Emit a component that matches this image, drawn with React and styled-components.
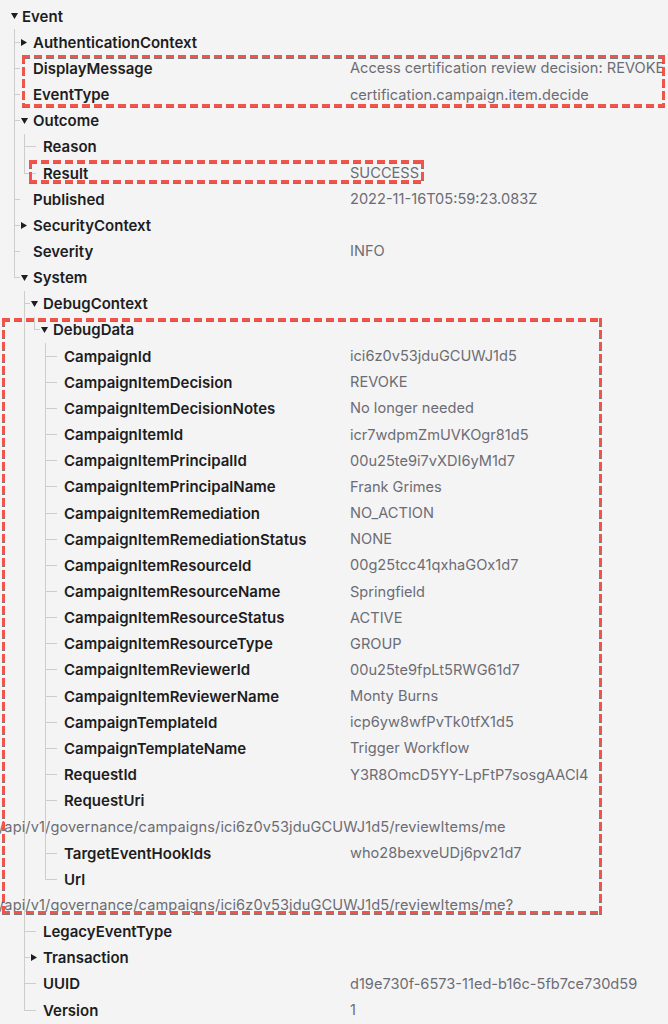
import styled, { createGlobalStyle, css } from "styled-components";

const ROW_H = 26.16;
const TEXT_X = [22, 33, 43, 53, 64];
const LINE_X = [10, 14, 24, 34, 45];
const LINE_COLOR = "#cdcdcd";

const GlobalStyle = createGlobalStyle`
  html, body {
    margin: 0;
    background: #f4f4f4;
  }
  body {
    font-family: Inter, "Noto Sans", sans-serif;
    -webkit-font-smoothing: antialiased;
  }
`;

const Page = styled.div`
  width: 668px;
  height: 1024px;
  padding-top: 3px;
  box-sizing: border-box;
  overflow: hidden;
`;

const NodeWrap = styled.div`
  position: relative;
  ${({ $line, $last }) =>
    $line != null &&
    css`
      &::before {
        content: "";
        position: absolute;
        left: ${$line}px;
        top: 0;
        width: 1px;
        background: ${LINE_COLOR};
        ${$last ? `height: ${ROW_H / 2}px;` : "bottom: 0;"}
      }
    `}
`;

const Row = styled.div`
  display: grid;
  grid-template-columns: 350px 1fr;
  align-items: center;
  height: ${ROW_H}px;
`;

const Label = styled.div`
  display: flex;
  align-items: center;
  padding-left: ${(p) => p.$pad}px;
  font-size: 15px;
  font-weight: 600;
  color: #1d1d22;
  white-space: nowrap;
`;

const Tick = styled.span`
  flex: none;
  width: ${(p) => p.$w}px;
  height: 1px;
  background: ${LINE_COLOR};
`;

const Slot = styled.span`
  flex: none;
  width: ${(p) => p.$w}px;
  display: flex;
  align-items: center;
  padding-left: 1px;
  box-sizing: border-box;
`;

const Value = styled.div`
  font-size: 14.6px;
  color: #6c6c74;
  white-space: nowrap;
`;

const WrappedValue = styled.div`
  height: ${ROW_H}px;
  line-height: ${ROW_H}px;
  margin-left: -1px;
  font-size: 14.6px;
  letter-spacing: 0.1px;
  color: #6c6c74;
  white-space: nowrap;
`;

const dashes = (angle) =>
  `repeating-linear-gradient(${angle}, #f0554c 0 8px, transparent 8px 12px)`;

const Highlight = styled.div`
  position: relative;
  &::after {
    content: "";
    position: absolute;
    z-index: 2;
    pointer-events: none;
    left: ${(p) => p.$box.x0}px;
    width: ${(p) => p.$box.x1 - p.$box.x0}px;
    top: ${(p) => p.$box.top}px;
    bottom: ${(p) => p.$box.bottom}px;
    background:
      ${dashes("90deg")} top left / 100% 3px no-repeat,
      ${dashes("90deg")} bottom left / 100% 3px no-repeat,
      ${dashes("180deg")} top left / 3px 100% no-repeat,
      ${dashes("180deg")} top right / 3px 100% no-repeat;
    filter: drop-shadow(0.5px 1.5px 0.7px rgba(40, 40, 40, 0.6));
  }
`;

function Caret({ open }) {
  return open ? (
    <svg width="7" height="6" viewBox="0 0 7 6">
      <polygon points="0,0 7,0 3.5,6" fill="#1d1d22" />
    </svg>
  ) : (
    <svg width="6" height="7" viewBox="0 0 6 7">
      <polygon points="0,0 6,3.5 0,7" fill="#1d1d22" />
    </svg>
  );
}

function Node({ node, depth, last }) {
  const hasCaret = !!node.children || node.collapsed;
  const slot = depth === 0 ? 12 : hasCaret || depth === 1 ? 13 : 7;
  const pad = LINE_X[depth];
  const tick = depth === 0 ? 0 : TEXT_X[depth] - slot - pad;

  const body = (
    <NodeWrap $line={depth === 0 ? null : LINE_X[depth]} $last={last}>
      <Row>
        <Label $pad={pad}>
          {tick > 0 && <Tick $w={tick} />}
          <Slot $w={slot}>{hasCaret && <Caret open={!!node.children} />}</Slot>
          {node.label}
        </Label>
        {node.value && <Value>{node.value}</Value>}
      </Row>
      {node.wrapped && <WrappedValue>{node.wrapped}</WrappedValue>}
      {node.children && <Children list={node.children} depth={depth + 1} />}
    </NodeWrap>
  );

  return node.box ? <Highlight $box={node.box}>{body}</Highlight> : body;
}

function Children({ list, depth }) {
  return list.map((item, i) => {
    const isLast = i === list.length - 1;
    if (item.items) {
      return (
        <Highlight key={i} $box={item.box}>
          {item.items.map((n, j) => (
            <Node key={n.label} node={n} depth={depth} last={isLast && j === item.items.length - 1} />
          ))}
        </Highlight>
      );
    }
    return <Node key={item.label} node={item} depth={depth} last={isLast} />;
  });
}

const uri = "/api/v1/governance/campaigns/ici6z0v53jduGCUWJ1d5/reviewItems/me";

const debugData = [
  { label: "CampaignId", value: "ici6z0v53jduGCUWJ1d5" },
  { label: "CampaignItemDecision", value: "REVOKE" },
  { label: "CampaignItemDecisionNotes", value: "No longer needed" },
  { label: "CampaignItemId", value: "icr7wdpmZmUVKOgr81d5" },
  { label: "CampaignItemPrincipalId", value: "00u25te9i7vXDI6yM1d7" },
  { label: "CampaignItemPrincipalName", value: "Frank Grimes" },
  { label: "CampaignItemRemediation", value: "NO_ACTION" },
  { label: "CampaignItemRemediationStatus", value: "NONE" },
  { label: "CampaignItemResourceId", value: "00g25tcc41qxhaGOx1d7" },
  { label: "CampaignItemResourceName", value: "Springfield" },
  { label: "CampaignItemResourceStatus", value: "ACTIVE" },
  { label: "CampaignItemResourceType", value: "GROUP" },
  { label: "CampaignItemReviewerId", value: "00u25te9fpLt5RWG61d7" },
  { label: "CampaignItemReviewerName", value: "Monty Burns" },
  { label: "CampaignTemplateId", value: "icp6yw8wfPvTk0tfX1d5" },
  { label: "CampaignTemplateName", value: "Trigger Workflow" },
  { label: "RequestId", value: "Y3R8OmcD5YY-LpFtP7sosgAACl4" },
  { label: "RequestUri", wrapped: uri },
  { label: "TargetEventHookIds", value: "who28bexveUDj6pv21d7" },
  { label: "Url", wrapped: uri + "?" },
];

const tree = {
  label: "Event",
  children: [
    { label: "AuthenticationContext", collapsed: true },
    {
      box: { x0: 22, x1: 665, top: 0, bottom: 1 },
      items: [
        { label: "DisplayMessage", value: "Access certification review decision: REVOKE" },
        { label: "EventType", value: "certification.campaign.item.decide" },
      ],
    },
    {
      label: "Outcome",
      children: [
        { label: "Reason" },
        { label: "Result", value: "SUCCESS", box: { x0: 29, x1: 424, top: 0, bottom: 3 } },
      ],
    },
    { label: "Published", value: "2022-11-16T05:59:23.083Z" },
    { label: "SecurityContext", collapsed: true },
    { label: "Severity", value: "INFO" },
    {
      label: "System",
      children: [
        {
          label: "DebugContext",
          children: [
            {
              label: "DebugData",
              box: { x0: 2, x1: 602, top: 1, bottom: 4 },
              children: debugData,
            },
          ],
        },
        { label: "LegacyEventType" },
        { label: "Transaction", collapsed: true },
        { label: "UUID", value: "d19e730f-6573-11ed-b16c-5fb7ce730d59" },
        { label: "Version", value: "1" },
      ],
    },
  ],
};

export default function App() {
  return (
    <>
      <GlobalStyle />
      <Page>
        <Node node={tree} depth={0} last />
      </Page>
    </>
  );
}
